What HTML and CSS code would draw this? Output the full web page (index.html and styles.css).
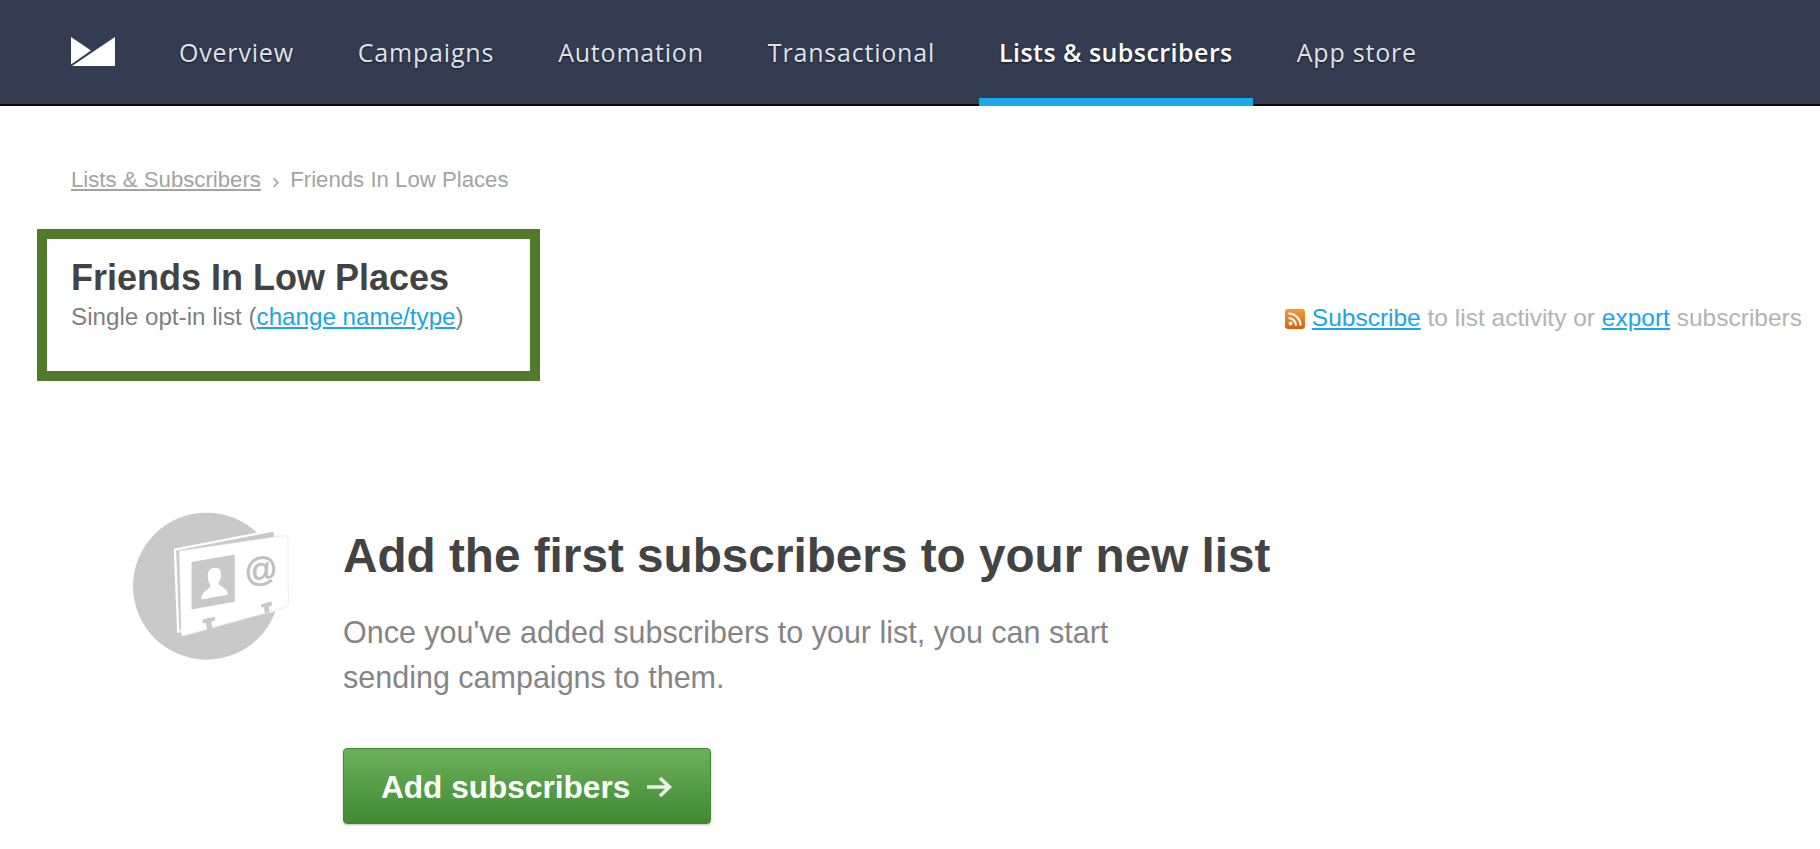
FILE: index.html
```html
<!DOCTYPE html>
<html lang="en">
<head>
<meta charset="utf-8">
<title>Friends In Low Places</title>
<link rel="stylesheet" href="styles.css">
</head>
<body>
<header class="topbar">
  <svg class="logo" viewBox="0 0 44 29" aria-hidden="true">
    <path d="M0 0 L20 13.500 L0 27.500 Z" fill="#fff"/>
    <path d="M1 29 L44 0 L44 29 Z" fill="#fff"/>
  </svg>
  <nav class="nav">
    <a class="nav-item">Overview</a>
    <a class="nav-item">Campaigns</a>
    <a class="nav-item">Automation</a>
    <a class="nav-item">Transactional</a>
    <a class="nav-item active">Lists &amp; subscribers</a>
    <a class="nav-item">App store</a>
  </nav>
</header>
<main class="page">
  <div class="crumbs"><a class="crumb-link">Lists &amp; Subscribers</a><span class="crumb-sep">›</span><span>Friends In Low Places</span></div>
  <div class="list-row">
    <div class="list-box">
      <h1 class="list-title">Friends In Low Places</h1>
      <p class="list-sub">Single opt-in list (<a class="link">change name/type</a>)</p>
    </div>
    <p class="list-actions">
      <svg class="rss" viewBox="0 0 20 20" aria-hidden="true">
        <defs><linearGradient id="rssg" x1="0" y1="0" x2="0" y2="1"><stop offset="0" stop-color="#f29a3c"/><stop offset="1" stop-color="#d9600f"/></linearGradient></defs>
        <rect width="20" height="20" rx="3" fill="url(#rssg)"/>
        <circle cx="5.500" cy="14.500" r="2" fill="#fff"/>
        <path d="M3.500 9 A7.500 7.500 0 0 1 11 16.500 M3.500 4.500 A12 12 0 0 1 15.500 16.500" fill="none" stroke="#fff" stroke-width="2.200"/>
      </svg>
      <a class="link">Subscribe</a> to list activity or <a class="link">export</a> subscribers
    </p>
  </div>
  <section class="empty">
    <svg class="empty-icon" viewBox="40 35 470 445" aria-hidden="true">
      <circle cx="260" cy="258" r="221" fill="#c9c9c9"/>
      <path d="M165 148 L455 92 Q464 90 466 100 L470 330 L175 395 Z" fill="#c9c9c9" stroke="#fff" stroke-width="7" stroke-linejoin="round"/>
      <path d="M178 152 L495 106 Q505 105 505 115 L506 312 Q506 320 498 322 L193 407 Q184 409 184 400 Z" fill="#fff" stroke="#e4e4e4" stroke-width="2" stroke-linejoin="round"/>
      <path d="M215 185 L345 163 L345 305 L215 328 Z" fill="#c9c9c9"/>
      <path d="M283 203 C300 200 306 212 303 230 C301 241 297 246 296 250 C296 258 322 262 323 278 L323 284 L245 298 L245 290 C247 274 271 266 272 256 C271 250 265 246 264 234 C262 216 268 205 283 203 Z" fill="#fff"/>
      <path d="M248 358 L285 350 L286 362 L274 365 L278 386 L262 391 L258 368 L249 370 Z M424 312 L456 304 L457 316 L447 319 L450 336 L436 340 L432 321 L425 323 Z" fill="#c9c9c9"/>
      <text class="at" x="374" y="243" transform="rotate(-8 420 215)">@</text>
    </svg>
    <div class="empty-body">
      <h2 class="empty-title">Add the first subscribers to your new list</h2>
      <p class="empty-text">Once you've added subscribers to your list, you can start<br>sending campaigns to them.</p>
      <a class="cta">Add subscribers
        <svg class="cta-arrow" viewBox="0 0 26 22" aria-hidden="true"><path d="M1 11 H23 M14 2 L23.500 11 L14 20" fill="none" stroke="#e9f3e6" stroke-width="3.600"/></svg>
      </a>
    </div>
  </section>
</main>
</body>
</html>
```

FILE: styles.css
```css
* { box-sizing: border-box; }
html, body { margin: 0; height: 100%; overflow: hidden; }
body { background: #fff; font-family: "Liberation Sans", Arial, sans-serif; color: #444; }

.topbar {
  display: flex;
  align-items: center;
  height: 106px;
  padding-left: 71px;
  background: #333c50;
  border-bottom: 2px solid #0a0a0a;
}
.logo { width: 44px; height: 29px; margin-right: 44px; margin-top: -2px; flex: none; }
.nav { display: flex; gap: 24px; height: 104px; }
.nav-item {
  display: flex;
  align-items: center;
  height: 106px;
  padding: 6px 20px 0;
  border-bottom: 8px solid transparent;
  font-family: "Open Sans", sans-serif;
  font-size: 25px;
  letter-spacing: 0.8px;
  color: #dfe3ea;
  text-shadow: 0 1px 2px rgba(0, 0, 0, 0.6);
}
.nav-item.active { color: #fff; font-weight: 600; letter-spacing: 0.45px; border-bottom-color: #19abe9; }

.page { padding: 62px 18px 0 37px; }
.crumbs { display: flex; align-items: center; padding-left: 34px; font-size: 22.2px; line-height: 24px; color: #a3a3a3; }
.crumb-link { text-decoration: underline; }
.crumb-sep { margin: 4px 11px 0 11px; font-size: 22px; line-height: 20px; }

.list-row { display: flex; justify-content: space-between; align-items: flex-start; margin-top: 37px; }
.list-box { width: 503px; height: 152px; padding: 18px 24px; border: 10px solid #507b29; }
.list-title { margin: 0; font-size: 36px; line-height: 42px; font-weight: 700; color: #434343; }
.list-sub { margin: 3px 0 0; font-size: 24.2px; line-height: 30px; color: #7f7f7f; }
.link { color: #19a5e6; text-decoration: underline; }
.list-actions { margin: 74px 0 0; font-size: 24.5px; line-height: 30px; color: #b3b3b3; white-space: nowrap; }
.rss { display: inline-block; width: 20px; height: 20px; vertical-align: -3px; }

.empty { display: flex; margin: 131px 0 0 96px; }
.empty-icon { width: 157px; height: 148px; flex: none; overflow: visible; }
.empty-body { margin-left: 53px; }
.empty-title { margin: 17px 0 0; font-size: 47.7px; line-height: 54px; font-weight: 700; color: #434343; }
.empty-text { margin: 27px 0 0; font-size: 30.5px; line-height: 45px; color: #858585; }
.cta {
  display: inline-flex;
  align-items: center;
  gap: 16px;
  width: 368px;
  height: 76px;
  margin-top: 48px;
  padding: 2px 0 0 37px;
  border: 1px solid #3f8a35;
  border-radius: 4px;
  background: linear-gradient(#6db05c, #3f8a32);
  box-shadow: 0 1px 2px rgba(0, 0, 0, 0.25);
  font-size: 31.6px;
  font-weight: 700;
  color: #fff;
}
.cta-arrow { width: 26px; height: 22px; }
.at { font-size: 100px; font-family: "Liberation Sans", sans-serif; fill: #c0c0c0; stroke: #c0c0c0; stroke-width: 2; }
```
